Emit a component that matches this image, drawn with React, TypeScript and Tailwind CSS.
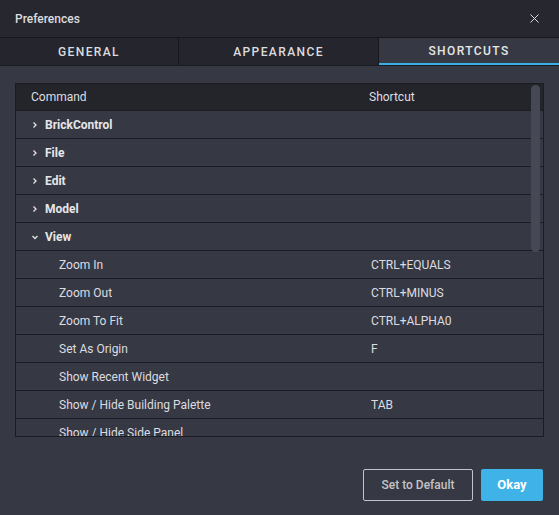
import { X } from 'lucide-react'

interface Row {
  label: string
  shortcut?: string
  group?: boolean
  open?: boolean
}

const rows: Row[] = [
  { label: 'BrickControl', group: true },
  { label: 'File', group: true },
  { label: 'Edit', group: true },
  { label: 'Model', group: true },
  { label: 'View', group: true, open: true },
  { label: 'Zoom In', shortcut: 'CTRL+EQUALS' },
  { label: 'Zoom Out', shortcut: 'CTRL+MINUS' },
  { label: 'Zoom To Fit', shortcut: 'CTRL+ALPHA0' },
  { label: 'Set As Origin', shortcut: 'F' },
  { label: 'Show Recent Widget' },
  { label: 'Show / Hide Building Palette', shortcut: 'TAB' },
  { label: 'Show / Hide Side Panel' },
]

function Chevron({ open }: { open?: boolean }) {
  return (
    <svg width="8" height="8" viewBox="0 0 8 8" className="ml-[1px] mr-[6px]">
      {open ? (
        <path d="M1.5 3 L4 5.5 L6.5 3" fill="none" stroke="#e4e4e4" strokeWidth="1.3" />
      ) : (
        <path d="M2.5 1.5 L5 4 L2.5 6.5" fill="none" stroke="#e4e4e4" strokeWidth="1.3" />
      )}
    </svg>
  )
}

export default function App() {
  const tabs = ['General', 'Appearance', 'Shortcuts']

  return (
    <div
      className="w-[559px] h-[515px] flex flex-col bg-[#363943] text-[#e2e2e4] overflow-hidden"
      style={{ fontFamily: 'Roboto, "Noto Sans", sans-serif' }}
    >
      {/* Title */}
      <div className="h-[38px] shrink-0 flex items-center justify-between pl-[15px] pr-[17px] bg-[#26272f] border-b border-[#17181c]">
        <span className="text-[12px] font-medium text-[#dcdcdf]">Preferences</span>
        <X size={15} strokeWidth={1.6} className="text-[#dcdcdf]" />
      </div>

      {/* Tabs */}
      <div className="h-[28px] shrink-0 flex bg-[#25262d] border-b border-[#1b1c21]">
        {tabs.map((t, i) => (
          <div
            key={t}
            className={`flex items-center justify-center text-[12px] font-medium uppercase tracking-[1.4px] ${
              i === 0 ? 'w-[179px] border-r border-[#16171b]' : i === 1 ? 'w-[200px] border-r border-[#16171b]' : 'flex-1'
            } ${i === 2 ? 'bg-[#363943] border-b-2 border-[#3aafe6] text-[#e6e6e8]' : 'text-[#dcdcdf]'}`}
          >
            {t}
          </div>
        ))}
      </div>

      {/* Table */}
      <div className="px-[15px] pt-[17px]">
        <div className="relative h-[354px] border border-[#1c1d22] overflow-hidden">
          <div className="h-[26px] flex items-center bg-[#24252b] text-[12px] text-[#dedee0]">
            <span className="w-[353px] pl-[15px]">Command</span>
            <span>Shortcut</span>
          </div>
          {rows.map((r) => (
            <div
              key={r.label}
              className="h-[28px] flex items-center border-t border-[#1c1d22] bg-[#363943] text-[12px]"
            >
              <div className={`w-[355px] flex items-center ${r.group ? 'pl-[14px]' : 'pl-[43px]'}`}>
                {r.group && <Chevron open={r.open} />}
                <span className={r.group ? 'font-bold text-[#e6e6e8]' : 'text-[#dcdce0]'}>{r.label}</span>
              </div>
              {r.shortcut && <span className="text-[#dcdce0]">{r.shortcut}</span>}
            </div>
          ))}
          {/* scrollbar */}
          <div className="absolute right-[3px] top-[1px] w-[9px] h-[167px] rounded-full bg-[#464955]" />
        </div>
      </div>

      {/* Footer */}
      <div className="flex justify-end gap-[8px] pr-[16px] pt-[32px]">
        <button className="w-[110px] h-[32px] border border-[#c4c4c8] rounded-[2px] text-[12px] font-medium text-[#c4c4c8]">
          Set to Default
        </button>
        <button className="w-[62px] h-[32px] bg-[#3fb3e8] rounded-[2px] text-[13px] font-bold text-white">
          Okay
        </button>
      </div>
    </div>
  )
}
